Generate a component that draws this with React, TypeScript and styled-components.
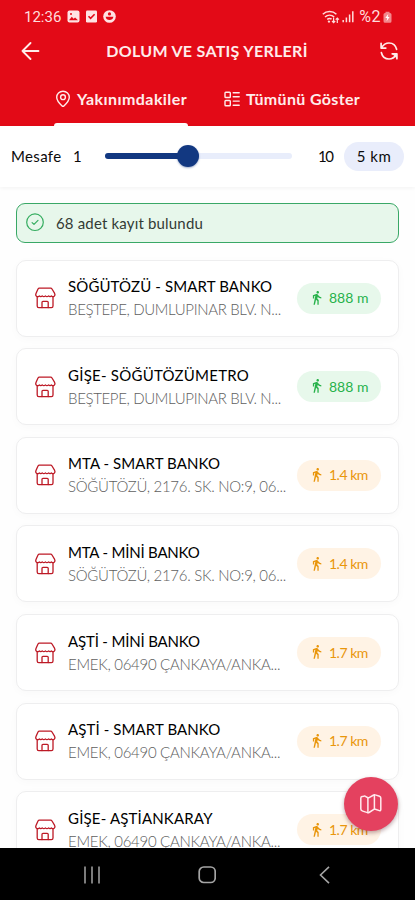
import React from 'react';
import styled, { createGlobalStyle } from 'styled-components';

const GlobalStyle = createGlobalStyle`
  *, *::before, *::after { box-sizing: border-box; }
  body { margin: 0; background: #fefefe; font-family: Lato, "Noto Sans", sans-serif; color: #0b0b0b; }
`;

const Screen = styled.div`
  position: relative;
  width: 415px;
  height: 900px;
  overflow: hidden;
  display: flex;
  flex-direction: column;
`;

const Header = styled.header`
  flex: none;
  height: 126px;
  background: #e30a17;
  color: #ffeceb;
  display: flex;
  flex-direction: column;
`;

const StatusBar = styled.div`
  height: 32px;
  padding: 1px 23px 0 24px;
  display: flex;
  align-items: center;
  font: 400 15px/32px Roboto, sans-serif;
  color: #ffdcdc;
`;

const Clock = styled.span`
  width: 43px;
`;

const StatusGroup = styled.div<{ $gap: number; $end?: boolean }>`
  display: flex;
  align-items: center;
  gap: ${(p) => p.$gap}px;
  margin-left: ${(p) => (p.$end ? 'auto' : '0')};
`;

const Percent = styled.span`
  font-size: 16px;
  letter-spacing: 0.5px;
  margin: 0 0 0 3px;
`;

const TitleBar = styled.div`
  height: 38px;
  padding: 0 16px 0 21px;
  display: flex;
  align-items: center;
  justify-content: space-between;
`;

const Title = styled.h1`
  margin: 0 5px 0 0;
  font-size: 16px;
  font-weight: 700;
  line-height: 20px;
  letter-spacing: 0.3px;
  white-space: nowrap;
`;

const Tabs = styled.nav`
  height: 56px;
  padding-left: 54px;
  display: flex;
  gap: 35px;
`;

const Tab = styled.div<{ $active?: boolean; $width: number; $track: number }>`
  width: ${(p) => p.$width}px;
  display: flex;
  flex-direction: column;
  font-size: 16px;
  font-weight: 700;
  letter-spacing: ${(p) => p.$track}px;
  white-space: nowrap;

  &::after {
    content: '';
    height: 3px;
    border-radius: 3px 3px 0 0;
    background: ${(p) => (p.$active ? '#fff' : 'transparent')};
  }
`;

const TabLabel = styled.div`
  flex: 1;
  display: flex;
  align-items: center;
  gap: 6px;
  padding: 4px 0 0 1px;
`;

const DistanceBar = styled.section`
  flex: none;
  height: 61px;
  padding: 0 11px;
  background: #fff;
  box-shadow: 0 1px 4px rgba(0, 0, 0, 0.05);
  display: flex;
  align-items: center;
  font-size: 15px;
`;

const Label = styled.span<{ $width: number; $track?: number }>`
  width: ${(p) => p.$width}px;
  line-height: 18px;
  padding-bottom: 1px;
  letter-spacing: ${(p) => p.$track ?? 0}px;
`;

const Slider = styled.div`
  width: 187px;
  height: 6px;
  margin: 0 26px 1px 0;
  display: flex;
  align-items: center;
  border-radius: 3px;
  background: #e8edfb;
`;

const SliderFill = styled.div`
  width: 73px;
  height: 6px;
  border-radius: 3px 0 0 3px;
  background: #123881;
`;

const SliderThumb = styled.div`
  flex: none;
  width: 22px;
  height: 22px;
  margin-left: -1px;
  border-radius: 50%;
  background: #123881;
  box-shadow: 0 1px 2px rgba(18, 56, 129, 0.4);
`;

const DistancePill = styled.div`
  width: 60px;
  height: 29px;
  padding-bottom: 1px;
  border-radius: 15px;
  background: #e9edfb;
  display: flex;
  align-items: center;
  justify-content: center;
  letter-spacing: 0.5px;
`;

const Content = styled.main`
  flex: 1;
  min-height: 0;
  overflow: hidden;
  padding: 16px 16px 0;
`;

const Notice = styled.div`
  height: 40px;
  padding: 0 9px 1px;
  display: flex;
  align-items: center;
  gap: 11px;
  border: 1px solid #39a866;
  border-radius: 9px;
  background: #e7f7eb;
  font-size: 15px;
  letter-spacing: 0.17px;
  color: #333b35;
`;

const List = styled.div`
  margin-top: 16.5px;
  display: flex;
  flex-direction: column;
  gap: 11.65px;
`;

const Card = styled.article`
  height: 77px;
  padding: 0 17px;
  display: flex;
  align-items: center;
  border: 1px solid #eeeeef;
  border-radius: 10px;
  background: #fff;
  box-shadow: 0 2px 10px rgba(0, 0, 0, 0.025);
`;

const Place = styled.div`
  flex: 1;
  min-width: 0;
  margin-left: 12px;
  white-space: nowrap;
  font-size: 15px;
`;

const PlaceName = styled.div<{ $track: number }>`
  line-height: 23px;
  color: #000;
  letter-spacing: ${(p) => p.$track}px;
`;

const Address = styled.div<{ $track: number }>`
  line-height: 23px;
  font-weight: 300;
  color: #606060;
  letter-spacing: ${(p) => p.$track}px;
`;

const DistanceTag = styled.div<{ $near: boolean }>`
  flex: none;
  width: 84px;
  height: 31px;
  border-radius: 16px;
  display: flex;
  align-items: center;
  gap: 5px;
  padding: 0 0 1px 11.5px;
  font-size: 14px;
  letter-spacing: ${(p) => (p.$near ? 0 : -0.5)}px;
  color: ${(p) => (p.$near ? '#28b24b' : '#e9960c')};
  background: ${(p) => (p.$near ? '#e7f8eb' : '#fff3e5')};
`;

const MapButton = styled.button`
  position: absolute;
  right: 17px;
  bottom: 69px;
  width: 54px;
  height: 54px;
  padding: 0;
  border: 0;
  border-radius: 50%;
  background: #e4415f;
  box-shadow: 0 2px 4px rgba(70, 0, 15, 0.35);
  display: flex;
  align-items: center;
  justify-content: center;
`;

const SystemNav = styled.footer`
  flex: none;
  height: 52px;
  background: #000;
  display: grid;
  grid-template-columns: 20px 18px 12px;
  column-gap: 97px;
  align-items: center;
  padding: 1px 0 0 81px;

  & > :last-child {
    margin-left: 6px;
  }
`;

const PhotoIcon = () => (
  <svg width="13" height="13" viewBox="0 0 13 13">
    <rect x=".5" y=".5" width="12" height="12" rx="2" fill="#ffe3e3" />
    <path d="M2 10.3 4.8 6.8l1.8 2 1.5-1.3L11 10.3z" fill="#e30a17" />
    <circle cx="4" cy="4" r="1" fill="#e30a17" />
  </svg>
);

const CheckBoxIcon = () => (
  <svg width="11" height="13" viewBox="0 0 11 13">
    <rect y=".5" width="11" height="12" rx="1.2" fill="#ffe3e3" />
    <path d="M2.5 6.2 4.6 8.3 8.6 4.2" fill="none" stroke="#e30a17" strokeWidth="1.6" />
  </svg>
);

const AccountIcon = () => (
  <svg width="13" height="13" viewBox="0 0 13 13">
    <circle cx="6.5" cy="6.5" r="6.3" fill="#ffe3e3" />
    <circle cx="6.5" cy="3.9" r="1.6" fill="#e30a17" />
    <path d="M2.6 6.7h7.8c-.3 2.2-1.9 3.2-3.9 3.2s-3.6-1-3.9-3.2z" fill="#e30a17" />
  </svg>
);

const WifiIcon = () => (
  <svg width="18" height="14" viewBox="0 0 18 14" fill="none" stroke="#ffdcdc" strokeWidth="1.5">
    <path d="M.8 4.3C4.6.7 10.6.7 14.4 4.3M3 7c2.7-2.5 6.5-2.5 9.2 0M5.2 9.4c1.6-1.3 3-1.3 4.4-.2" />
    <path d="m6.2 11 1.5 1.2" strokeWidth="2" />
    <path d="M11.6 7.5v5M10 11l1.6 1.6 1.6-1.6M15.3 13V8M13.7 9.6 15.3 8l1.6 1.6" strokeWidth="1.2" />
  </svg>
);

const SignalIcon = () => (
  <svg width="12" height="13" viewBox="0 0 12 13" stroke="#ffdcdc" strokeWidth="1.5">
    <path d="M1.2 12.3v-2.2M4.4 12.3V7.6M7.6 12.3V4.4M10.8 12.3V1.2" />
  </svg>
);

const BatteryIcon = () => (
  <svg width="9" height="12" viewBox="0 0 9 12">
    <path d="M2.5.8h4V2H7a1.5 1.5 0 0 1 1.5 1.5v6.8a1.5 1.5 0 0 1-1.5 1.5H2A1.5 1.5 0 0 1 .5 10.3V3.5A1.5 1.5 0 0 1 2 2h.5z" fill="#f3888c" />
    <path d="M5.2 2.9 2.3 7.1h1.9l-.6 3.1 3-4.3H4.8z" fill="#fff" />
  </svg>
);

const BackIcon = () => (
  <svg width="19" height="18" viewBox="0 0 19 18" fill="none" stroke="#ffeceb" strokeWidth="1.8" strokeLinecap="round" strokeLinejoin="round">
    <path d="M17.5 9H1.5M9.5 1 1.5 9l8 8" />
  </svg>
);

const RefreshIcon = () => (
  <svg width="20" height="20" viewBox="0 0 20 20" fill="none" stroke="#ffeceb" strokeWidth="1.7" strokeLinecap="round" strokeLinejoin="round">
    <path d="M17.6 8.3C16.7 4.5 13.6 2 10 2 6.6 2 4.2 4 2.4 6.8M2.1 2.3v4.8h4.7" />
    <path d="M2.4 11.7C3.3 15.5 6.4 18 10 18c3.4 0 5.8-2 7.6-4.8M17.9 17.7v-4.9h-4.7" />
    <path d="M17.4 13.3v3.4l-3.3-3.4z" fill="#ffeceb" strokeWidth="1" />
  </svg>
);

const PinIcon = () => (
  <svg width="16" height="18" viewBox="0 0 16 18" fill="none" stroke="#ffeceb" strokeWidth="1.4" strokeLinejoin="round">
    <path d="M8 1.2c3.6 0 6.3 2.6 6.3 6 0 3.5-2.8 6.3-5.4 8.7-.5.5-1.3.5-1.8 0C4.5 13.5 1.7 10.7 1.7 7.2c0-3.4 2.7-6 6.3-6z" />
    <circle cx="8" cy="7.2" r="2.4" />
  </svg>
);

const ListIcon = () => (
  <svg width="16" height="16" viewBox="0 0 16 16" fill="none" stroke="#ffeceb" strokeWidth="1.4" strokeLinecap="round">
    <rect x="1" y="1.2" width="5.3" height="5.3" rx=".8" />
    <rect x="1" y="9.5" width="5.3" height="5.3" rx=".8" />
    <path d="M9.2 1.8h6M9.2 5.8h6M9.2 10.1h6M9.2 14.2h6" />
  </svg>
);

const CheckIcon = () => (
  <svg width="19" height="19" viewBox="0 0 19 19" fill="none" stroke="#35ad60" strokeWidth="1.2" strokeLinecap="round" strokeLinejoin="round">
    <circle cx="9" cy="9.2" r="8.3" />
    <path d="m6.1 9.6 1.9 1.8 4-4" />
  </svg>
);

const StoreIcon = () => (
  <svg width="22" height="22" viewBox="0 0 22 22" fill="none" stroke="#bd1a26" strokeWidth="1.3" strokeLinecap="round" strokeLinejoin="round">
    <path d="M5.3 1.2h11.4c.6 0 1 .3 1.3.8l2.5 4.2c.6 1.2.5 2.4-.3 3-.8.6-1.9.4-2.7-.3-.8.9-2.1.9-3 0-.9.9-2.2.9-3.1 0-.9.9-2.2.9-3.1 0-.9.9-2.2.9-3 0-.8.7-1.9.9-2.8.3-.9-.6-.9-1.8-.4-3L4 2c.3-.5.7-.8 1.3-.8z" />
    <path d="M3.2 9.8v9.3c0 1 .6 1.6 1.6 1.6h12.6c1 0 1.6-.6 1.6-1.6V9.8" />
    <path d="M8 20.500v-5.200c0-.6.400-1 1-1h4.200c.6 0 1 .4 1 1v5.200" />
  </svg>
);

const WalkIcon = () => (
  <svg width="15.5" height="15.5" viewBox="0 0 24 24" fill="currentColor">
    <path d="M13.5 5.5c1.1 0 2-.9 2-2s-.9-2-2-2-2 .9-2 2 .9 2 2 2zM9.800 8.900 7 23h2.100l1.800-8 2.100 2v6h2v-7.500l-2.100-2 .6-3C14.800 12 16.800 13 19 13v-2c-1.900 0-3.500-1-4.300-2.400l-1-1.600c-.4-.6-1-1-1.700-1-.3 0-.5.1-.8.1L6 8.300V13h2V9.600l1.800-.7" />
  </svg>
);

const MapIcon = () => (
  <svg width="24" height="22" viewBox="0 0 24 22" fill="none" stroke="#ffe9ed" strokeWidth="1.5" strokeLinecap="round" strokeLinejoin="round">
    <path d="M1.8 5.2c0-.8.5-1.4 1.3-1.6l1.6-.4c.6-.2 1.1-.1 1.6.1l2.2 1.2c.5.2 1.1.3 1.6.1l4.600-2.600c.5-.3 1.100-.3 1.600-.1l4.200 1.300c.8.300 1.300.9 1.300 1.700v11.700c0 .8-.7 1.300-1.500 1l-3.900-1.400c-.5-.2-1-.2-1.500.1l-4.900 3.200c-.5.300-1 .4-1.500.1l-4.800-1.500c-1.100-.3-1.900-1-1.900-2.100z" />
    <path d="M8.9 4.7v14.900M15.4 2v14.2" />
  </svg>
);

const RecentsIcon = () => (
  <svg width="20" height="18" viewBox="0 0 20 18" stroke="#a5a5a5" strokeWidth="1.5">
    <path d="M4 .5v17M11 .5v17M18 .5v17" />
  </svg>
);

const HomeIcon = () => (
  <svg width="18" height="18" viewBox="0 0 18 18" fill="none" stroke="#a5a5a5" strokeWidth="1.7">
    <rect x="1.2" y="1" width="16" height="15.5" rx="4.5" />
  </svg>
);

const BackChevron = () => (
  <svg width="12" height="18" viewBox="0 0 12 18" fill="none" stroke="#a5a5a5" strokeWidth="1.6">
    <path d="M10 .8 1.5 9 10 17.2" />
  </svg>
);

interface PlaceItem {
  name: string;
  nameTrack: number;
  address: string;
  addressTrack: number;
  distance: string;
}

const BESTEPE = { address: 'BEŞTEPE, DUMLUPINAR BLV. N...', addressTrack: -0.35 };
const SOGUTOZU = { address: 'SÖĞÜTÖZÜ, 2176. SK. NO:9, 06...', addressTrack: -0.28 };
const EMEK = { address: 'EMEK, 06490 ÇANKAYA/ANKA...', addressTrack: -0.28 };

const places: PlaceItem[] = [
  { name: 'SÖĞÜTÖZÜ - SMART BANKO', nameTrack: 0.12, ...BESTEPE, distance: '888 m' },
  { name: 'GİŞE- SÖĞÜTÖZÜMETRO', nameTrack: 0.24, ...BESTEPE, distance: '888 m' },
  { name: 'MTA - SMART BANKO', nameTrack: 0.08, ...SOGUTOZU, distance: '1.4 km' },
  { name: 'MTA - MİNİ BANKO', nameTrack: -0.2, ...SOGUTOZU, distance: '1.4 km' },
  { name: 'AŞTİ - MİNİ BANKO', nameTrack: -0.17, ...EMEK, distance: '1.7 km' },
  { name: 'AŞTİ - SMART BANKO', nameTrack: 0.1, ...EMEK, distance: '1.7 km' },
  { name: 'GİŞE- AŞTİANKARAY', nameTrack: 0.17, ...EMEK, distance: '1.7 km' },
];

export default function App() {
  return (
    <Screen>
      <GlobalStyle />
      <Header>
        <StatusBar>
          <Clock>12:36</Clock>
          <StatusGroup $gap={6}>
            <PhotoIcon />
            <CheckBoxIcon />
            <AccountIcon />
          </StatusGroup>
          <StatusGroup $gap={2} $end>
            <WifiIcon />
            <SignalIcon />
            <Percent>%2</Percent>
            <BatteryIcon />
          </StatusGroup>
        </StatusBar>
        <TitleBar>
          <BackIcon />
          <Title>DOLUM VE SATIŞ YERLERİ</Title>
          <RefreshIcon />
        </TitleBar>
        <Tabs>
          <Tab $active $width={134} $track={0.43}>
            <TabLabel><PinIcon />Yakınımdakiler</TabLabel>
          </Tab>
          <Tab $width={140} $track={0.35}>
            <TabLabel><ListIcon />Tümünü Göster</TabLabel>
          </Tab>
        </Tabs>
      </Header>
      <DistanceBar>
        <Label $width={62} $track={0.35}>Mesafe</Label>
        <Label $width={32}>1</Label>
        <Slider>
          <SliderFill />
          <SliderThumb />
        </Slider>
        <Label $width={26} $track={-1.5}>10</Label>
        <DistancePill>5 km</DistancePill>
      </DistanceBar>
      <Content>
        <Notice><CheckIcon />68 adet kayıt bulundu</Notice>
        <List>
          {places.map((p) => (
            <Card key={p.name}>
              <StoreIcon />
              <Place>
                <PlaceName $track={p.nameTrack}>{p.name}</PlaceName>
                <Address $track={p.addressTrack}>{p.address}</Address>
              </Place>
              <DistanceTag $near={p.distance === '888 m'}><WalkIcon />{p.distance}</DistanceTag>
            </Card>
          ))}
        </List>
      </Content>
      <MapButton aria-label="Harita"><MapIcon /></MapButton>
      <SystemNav>
        <RecentsIcon />
        <HomeIcon />
        <BackChevron />
      </SystemNav>
    </Screen>
  );
}
